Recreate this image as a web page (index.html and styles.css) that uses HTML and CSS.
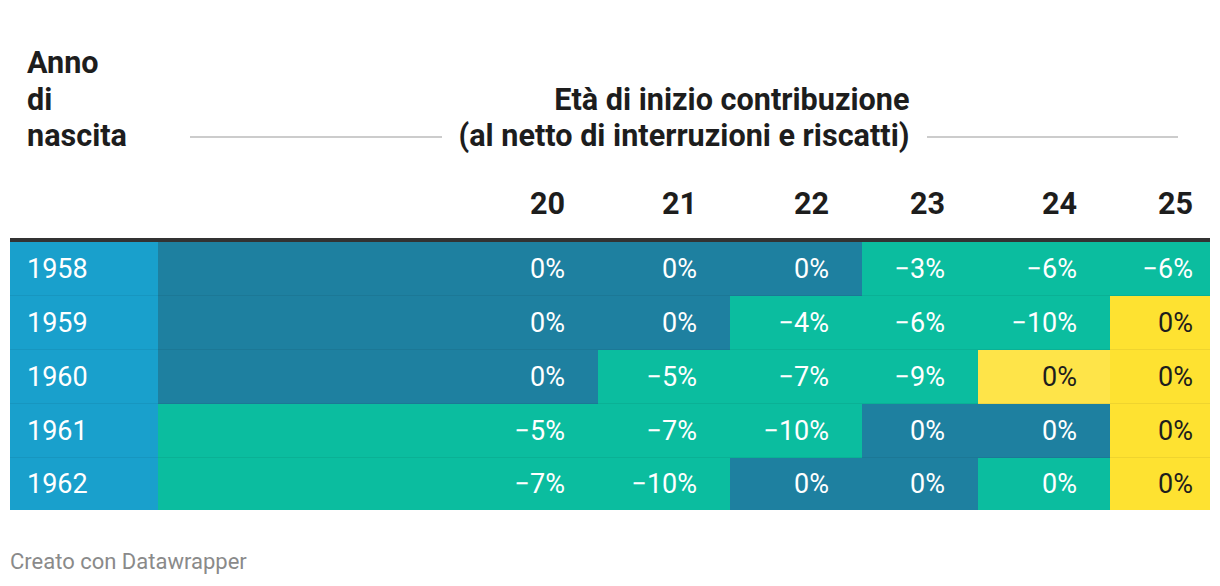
FILE: index.html
```html
<!DOCTYPE html>
<html lang="it">
<head>
<meta charset="utf-8">
<title>Età di inizio contribuzione</title>
<link rel="stylesheet" href="styles.css">
</head>
<body>
<div class="chart">
  <div class="thead">
    <div class="th-stub">Anno<br>di<br>nascita</div>
    <div class="th-group">
      <span class="rule"></span>
      <span class="group-label">Età di inizio contribuzione<br>(al netto di interruzioni e riscatti)</span>
      <span class="rule"></span>
    </div>
    <div class="th-blank"></div>
    <div class="th-num">20</div>
    <div class="th-num">21</div>
    <div class="th-num">22</div>
    <div class="th-num">23</div>
    <div class="th-num">24</div>
    <div class="th-num last">25</div>
  </div>
  <div class="tbody">
    <div class="row">
      <div class="year">1958</div>
      <div class="cell dark">0%</div>
      <div class="cell dark">0%</div>
      <div class="cell dark">0%</div>
      <div class="cell green">−3%</div>
      <div class="cell green">−6%</div>
      <div class="cell green last">−6%</div>
    </div>
    <div class="row">
      <div class="year">1959</div>
      <div class="cell dark">0%</div>
      <div class="cell dark">0%</div>
      <div class="cell green">−4%</div>
      <div class="cell green">−6%</div>
      <div class="cell green">−10%</div>
      <div class="cell yellow last">0%</div>
    </div>
    <div class="row">
      <div class="year">1960</div>
      <div class="cell dark">0%</div>
      <div class="cell green">−5%</div>
      <div class="cell green">−7%</div>
      <div class="cell green">−9%</div>
      <div class="cell yellow-light">0%</div>
      <div class="cell yellow last">0%</div>
    </div>
    <div class="row">
      <div class="year">1961</div>
      <div class="cell green">−5%</div>
      <div class="cell green">−7%</div>
      <div class="cell green">−10%</div>
      <div class="cell dark">0%</div>
      <div class="cell dark">0%</div>
      <div class="cell yellow last">0%</div>
    </div>
    <div class="row">
      <div class="year">1962</div>
      <div class="cell green">−7%</div>
      <div class="cell green">−10%</div>
      <div class="cell dark">0%</div>
      <div class="cell dark">0%</div>
      <div class="cell green">0%</div>
      <div class="cell yellow last">0%</div>
    </div>
  </div>
  <div class="footer">Creato con Datawrapper</div>
</div>
</body>
</html>
```

FILE: styles.css
```css
html, body {
  margin: 0;
  padding: 0;
  background: #ffffff;
}

body {
  font-family: Roboto, "Liberation Sans", sans-serif;
  color: #1d1d1d;
}

.chart {
  padding: 45px 10px 0 10px;
  width: 1200px;
}

.thead,
.row {
  display: grid;
  grid-template-columns: 148px 440px 132px 132px 116px 132px 100px;
}

.thead {
  font-weight: 700;
  font-size: 30.6px;
  line-height: 36.5px;
  color: #1d1d1d;
  border-bottom: 4px solid #333333;
}

.th-stub {
  grid-column: 1;
  padding-left: 17px;
  white-space: nowrap;
}

.th-group {
  grid-column: 2 / 8;
  align-self: end;
  display: flex;
  align-items: flex-end;
  gap: 17px;
  padding: 0 32px;
}

.rule {
  flex: 1;
  height: 2px;
  background: #cccccc;
  margin-bottom: 17px;
}

.group-label {
  text-align: right;
  white-space: nowrap;
}

.th-num {
  text-align: right;
  padding: 31px 33px 16px 0;
}

.th-num.last {
  padding-right: 17px;
}

.row {
  height: 54px;
  font-size: 27px;
  line-height: 54px;
}

.row:last-child {
  height: 52px;
  line-height: 52px;
}

.year,
.cell {
  box-shadow: inset 0 -1px 0 rgba(0, 0, 0, 0.06);
}

.row:last-child .year,
.row:last-child .cell {
  box-shadow: none;
}

.year {
  background: #19a0cc;
  color: #ffffff;
  padding-left: 17px;
}

.cell {
  text-align: right;
  padding-right: 33px;
  color: #ffffff;
}

.cell.last {
  padding-right: 17px;
}

.dark { background: #1e80a0; }
.green { background: #0bbd9f; }
.yellow { background: #fee231; color: #1d1d1d; }
.yellow-light { background: #fee449; color: #1d1d1d; }

.footer {
  margin-top: 37px;
  font-size: 22px;
  line-height: 30px;
  color: #8a8a8a;
}
```
